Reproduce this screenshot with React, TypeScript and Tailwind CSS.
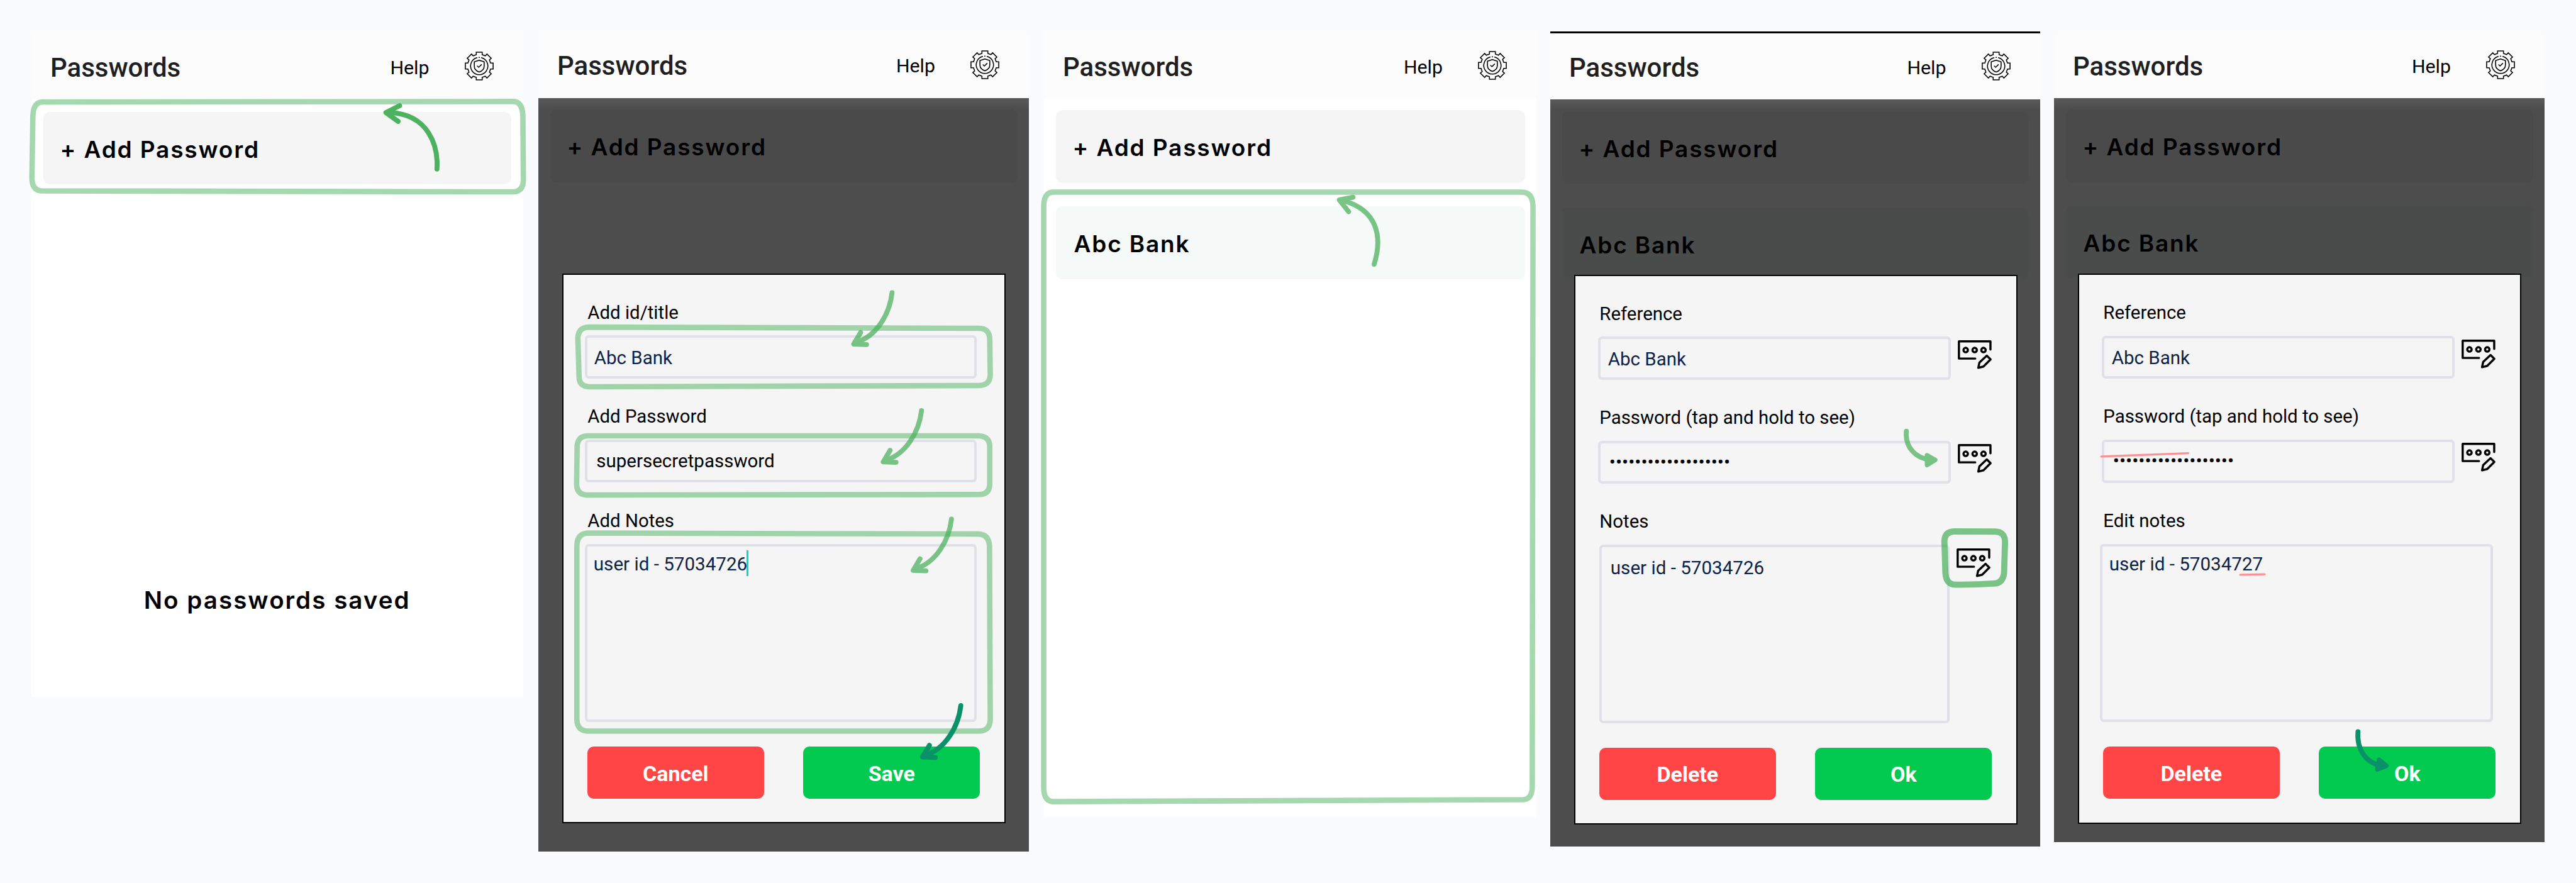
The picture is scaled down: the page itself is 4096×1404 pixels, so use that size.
import React from "react";

function GearShieldIcon() {
  return (
    <svg viewBox="-88 -88 176 176" className="h-[46px] w-[46px]" fill="none" stroke="#000" strokeWidth="6" strokeLinecap="round">
      <path
        strokeLinejoin="miter"
        strokeLinecap="butt"
        d="M-18-84.5H18V-69L37-62L47-73L73-47L62-37L69-18H84.5V18H69L62 37L73 47L47 73L37 62L18 69V84.5H-18V69L-37 62L-47 73L-73 47L-62 37L-69 18H-84.5V-18H-69L-62-37L-73-47L-47-73L-37-62L-18-69Z"
      />
      <path d="M-14-50.5A52.5 52.5 0 1 0 14-50.5" />
      <path d="M-1.5-52.3H1.5" />
      <path strokeLinejoin="round" d="M0-35L30-26V0C30 18 17 31 0 36C-17 31-30 18-30 0V-26Z" />
      <path strokeLinejoin="round" d="M-11 0L-3 7.500L13-8" />
    </svg>
  );
}

function EditFieldIcon({ className }: { className: string }) {
  return (
    <svg viewBox="0 0 69 59" className={"h-[46px] w-[54px] shrink-0 " + className} fill="none" stroke="#000" strokeWidth="4.4" strokeLinecap="round" strokeLinejoin="round">
      <path d="M66.500 19V2.200H2.200V37.400H35.500" />
      <circle cx="16" cy="20" r="4.500" />
      <circle cx="34.300" cy="20" r="4.500" />
      <circle cx="52.300" cy="20" r="4.500" />
      <path d="M59 31.400L66.700 39.200L52.300 53.600L41.700 56.200L44 45.500Z" />
    </svg>
  );
}

function Header({ className }: { className: string }) {
  return (
    <header className={"flex items-end bg-[#fcfcfc] pb-[30px] pl-[30px] pr-[47px] " + className}>
      <h1 className="mb-[-0.500px] text-[42px] font-medium leading-none text-[#1f1f1f]">Passwords</h1>
      <span className="mb-[5px] ml-auto mr-[56px] text-[30.300px] leading-none text-black">Help</span>
      <GearShieldIcon />
    </header>
  );
}

function Row({ children, className }: { children: React.ReactNode; className: string }) {
  return (
    <div
      className={
        "mx-[18.500px] flex h-[115.500px] items-center rounded-[10px] pt-[4px] font-[Inter,sans-serif] text-[37px] font-semibold leading-none tracking-[1.850px] text-black " +
        className
      }
    >
      {children}
    </div>
  );
}

function Label({ children, className }: { children: React.ReactNode; className: string }) {
  return <div className={"h-10 pl-[38px] text-[29.400px] leading-10 text-black " + className}>{children}</div>;
}

function Buttons({ left, right }: { left: string; right: string }) {
  return (
    <div className="mt-[39px] flex gap-[62.500px] pl-[37.500px] text-[34px] font-bold leading-none text-white">
      <button className="h-[83px] w-[281px] rounded-[10px] bg-[#ff4545] pt-[2px]">{left}</button>
      <button className="h-[83px] w-[281px] rounded-[10px] bg-[#02c94f] pt-[2px]">{right}</button>
    </div>
  );
}

const field = "flex h-[68.500px] items-center rounded-[6px] border-4 border-[#e0e1e8] leading-10 ";
const area = "h-[283.500px] rounded-[6px] border-4 border-[#e0e1e8] text-[29.600px] leading-10 text-[#0d2348] ";
const dialog = "absolute left-[38.300px] h-[874.500px] w-[704.500px] border-2 border-black bg-[#f5f5f5] ";
const shade = "relative flex-1 bg-[#4d4d4d] bg-[linear-gradient(#5a5a5a,#4d4d4d_16px)] ";
const DOTS = "•".repeat(19);

function AddDialog() {
  return (
    <div className={dialog + "top-[279px]"}>
      <Label className="mt-[40px]">Add id/title</Label>
      <div className={field + "ml-[33.500px] mt-[16.500px] w-[623.500px] pl-[11px] pt-[3px] text-[29.500px] text-[#0d2348]"}>Abc Bank</div>
      <Label className="mt-[40px]">Add Password</Label>
      <div className={field + "ml-[33.500px] mt-[17px] w-[623.500px] pl-[14.500px] text-[29.500px] text-black"}>supersecretpassword</div>
      <Label className="mt-[40.500px]">Add Notes</Label>
      <div className={area + "ml-[33.500px] mt-[17px] flex w-[623.500px] pl-[10px] pt-[8.500px]"}>
        user id - 57034726
        <span className="-mt-0.5 -ml-px h-[41px] w-[3px] bg-[#00dcc8]" />
      </div>
      <Buttons left="Cancel" right="Save" />
    </div>
  );
}

function ViewDialog({ className, notesLabel, notes }: { className: string; notesLabel: string; notes: React.ReactNode }) {
  return (
    <div className={dialog + className}>
      <Label className="mt-[40px]">Reference</Label>
      <div className="mt-[16.500px] flex">
        <div className={field + "ml-[35.500px] w-[561px] pl-[12px] pt-[3px] text-[29.500px] text-[#0d2348]"}>Abc Bank</div>
        <EditFieldIcon className="ml-[11.500px] mt-[6px]" />
      </div>
      <Label className="mt-[40px]">Password (tap and hold to see)</Label>
      <div className="mt-[17px] flex">
        <div className={field + "ml-[35.500px] w-[561px] pl-[14px] text-[30px] text-black"}>{DOTS}</div>
        <EditFieldIcon className="ml-[11.500px] mt-[5px]" />
      </div>
      <Label className="mt-[40px]">{notesLabel}</Label>
      {notes}
      <Buttons left="Delete" right="Ok" />
    </div>
  );
}

function Annotations() {
  return (
    <svg viewBox="0 0 5247 1798" className="pointer-events-none absolute inset-0 h-full w-full" fill="none" stroke="#4db25f" strokeWidth="11" strokeLinecap="round" strokeLinejoin="round">
      <g strokeOpacity=".5">
        <path d="M86 207.500L1046 206.500Q1064 207 1065 236L1066 366Q1066 389 1046 390.500L84 388.500Q65 387 65 362L67 236Q68 208 86 207.500Z" />
        <path d="M1199 666L1995 668.500Q2015 669 2016 690L2017 764Q2016 784 1995 785L1200 787.500Q1180 787 1179.500 768L1177 688Q1178 667 1199 666Z" />
        <path d="M1197 887.500H1995Q2016 889 2016 910V985Q2016 1006 1995 1007L1195 1008Q1175 1007 1174.500 986L1175.500 910Q1176 888 1197 887.500Z" />
        <path d="M1197 1085.500L1993 1087.500Q2014 1088 2015.500 1112L2017 1466Q2016 1488 1995 1489H1197Q1176 1488 1175 1466V1110Q1176 1087 1197 1085.500Z" />
        <path d="M2144 391H3100Q3121 391 3122.500 418L3121 1604Q3120 1628 3102 1628.500L2144 1632.500Q2126 1631 2126 1604V418Q2127 392 2144 391Z" />
      </g>
      <g strokeWidth="10">
        <path d="M890 344C893 298 874 233 794 229" />
        <path d="M814 215L786 229L811 247" />
      </g>
      <g opacity=".75" strokeWidth="10">
        <path d="M1817 596C1812 640 1785 685 1744 697" />
        <path d="M1753 677L1739 700.500L1765 701.500" />
      </g>
      <g opacity=".75" strokeWidth="10">
        <path d="M1877 836C1872 880 1845 925 1804 937" />
        <path d="M1813 917L1799 940.500L1825 941.500" />
      </g>
      <g opacity=".75" strokeWidth="10">
        <path d="M1938 1057C1933 1101 1906 1146 1865 1158" />
        <path d="M1874 1138L1860 1161.500L1886 1162.500" />
      </g>
      <g stroke="#0a9169" strokeWidth="10">
        <path d="M1957 1437C1952 1481 1925 1526 1884 1538" />
        <path d="M1893 1518L1879 1541.500L1905 1542.500" />
      </g>
      <g opacity=".75" strokeWidth="10">
        <path d="M2799 538C2817 480 2804 428 2738 409" />
        <path d="M2756 401.500L2728 407L2747 431" />
      </g>
      <g opacity=".75">
        <path strokeWidth="10" d="M3883 878C3880 910 3901 936 3940 937" />
        <path strokeWidth="9" fill="#4db25f" d="M3925 927L3942 936.500L3925 947Z" />
      </g>
      <path strokeOpacity=".75" strokeWidth="12.500" d="M3980 1082L4064 1082.500Q4084 1083 4084 1104L4082 1168Q4079 1188 4061 1188.500Q4020 1191 3982 1190.500Q3964 1190 3962.500 1166L3960.500 1102Q3961 1083 3980 1082Z" />
      <g stroke="#0a9169">
        <path strokeWidth="10" d="M4803 1490C4800 1525 4818 1556 4856 1560" />
        <path strokeWidth="9" fill="#0a9169" d="M4846 1547L4861 1559.500L4842 1567Z" />
      </g>
      <g stroke="#fa9398" strokeWidth="4.200">
        <path d="M4280 929.500L4457 923" />
        <path d="M4563 1170.500L4613 1169.500" />
      </g>
    </svg>
  );
}

export default function App() {
  return (
    <main className="relative flex h-[1404px] w-[4096px] items-start overflow-hidden bg-[#f9fbfd] pl-[50px] font-[Roboto,sans-serif]">
      <section className="mt-[52px] flex h-[1055.500px] w-[781.500px] flex-col bg-white">
        <Header className="h-[106px]" />
        <Row className="mt-[19.500px] bg-[#f5f5f5] pl-[27px]">+ Add Password</Row>
        <p className="mt-[642px] text-center font-[Inter,sans-serif] text-[38.500px] font-semibold leading-none tracking-[2.050px] text-black">No passwords saved</p>
      </section>

      <section className="ml-[24.500px] mt-[52.500px] flex h-[1301px] w-[780px] flex-col">
        <Header className="h-[103px]" />
        <div className={shade}>
          <Row className="mt-[18.500px] bg-[#4a4a4a] pl-[27px]">+ Add Password</Row>
          <AddDialog />
        </div>
      </section>

      <section className="ml-[24px] mt-[49.500px] flex h-[1249px] w-[783px] flex-col bg-white">
        <Header className="h-[107.500px]" />
        <Row className="mt-[18px] bg-[#f5f5f5] pl-[27px]">+ Add Password</Row>
        <Row className="mt-[37.500px] bg-[#f5f9f8] pl-[29px]">Abc Bank</Row>
      </section>

      <section className="ml-[22px] mt-[50px] flex h-[1295.500px] w-[778.500px] flex-col">
        <Header className="h-[108px] border-t-[3px] border-black" />
        <div className={shade}>
          <Row className="mt-[18.500px] bg-[#4a4a4a] pl-[27px]">+ Add Password</Row>
          <Row className="mt-[37.500px] bg-[#4a4c4b] pl-[28px]">Abc Bank</Row>
          <ViewDialog
            className="top-[278.500px]"
            notesLabel="Notes"
            notes={
              <div className="mt-[17px] flex">
                <div className={area + "ml-[37.500px] w-[557px] pl-[14px] pt-[13px]"}>user id - 57034726</div>
                <EditFieldIcon className="ml-[11px] mt-[5.500px]" />
              </div>
            }
          />
        </div>
      </section>

      <section className="ml-[22.500px] mt-[49.500px] flex h-[1289.500px] w-[780px] flex-col">
        <Header className="h-[106.500px]" />
        <div className={shade}>
          <Row className="mt-[18px] bg-[#4a4a4a] pl-[27px]">+ Add Password</Row>
          <Row className="mt-[37.500px] bg-[#4a4c4b] pl-[28px]">Abc Bank</Row>
          <ViewDialog
            className="top-[279px]"
            notesLabel="Edit notes"
            notes={<div className={area + "ml-[33px] mt-[17px] w-[624.500px] pl-[10.500px] pt-[8.500px]"}>user id - 57034727</div>}
          />
        </div>
      </section>

      <Annotations />
    </main>
  );
}
